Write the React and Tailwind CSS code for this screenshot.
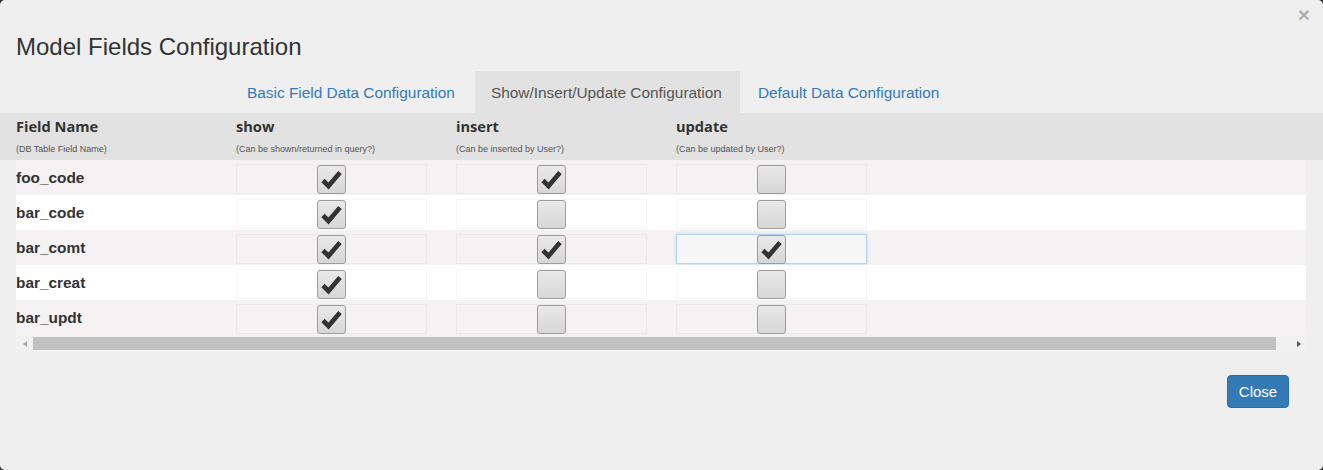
import React from 'react';

const columns = [
    { key: 'show', label: 'show', hint: '(Can be shown/returned in query?)' },
    { key: 'insert', label: 'insert', hint: '(Can be inserted by User?)' },
    { key: 'update', label: 'update', hint: '(Can be updated by User?)' },
];

const fields = [
    { name: 'foo_code', show: true, insert: true, update: false },
    { name: 'bar_code', show: true, insert: false, update: false },
    { name: 'bar_comt', show: true, insert: true, update: true, focus: 'update' },
    { name: 'bar_creat', show: true, insert: false, update: false },
    { name: 'bar_updt', show: true, insert: false, update: false },
];

const tabs = [
    { label: 'Basic Field Data Configuration', active: false },
    { label: 'Show/Insert/Update Configuration', active: true },
    { label: 'Default Data Configuration', active: false },
];

const CheckBox = ({ checked }) => (
    <div className="w-[29px] h-[29px] rounded-[3px] border border-[#9c9c9c] bg-gradient-to-b from-[#e9e9e9] to-[#d7d7d7] flex items-center justify-center">
        {checked && (
            <svg width="23" height="23" viewBox="0 0 23 23">
                <path d="M3 12.5 L8.5 18 L20 4.5" fill="none" stroke="#333" strokeWidth="4.6" strokeLinejoin="miter" />
            </svg>
        )}
    </div>
);

const App = () => {
    return (
        <div className="w-[1323px] h-[470px] bg-[#333] font-['Liberation_Sans',Arial,sans-serif]">
            <div className="relative w-full h-full bg-[#efefef] rounded-[5px]">
                {/* close x */}
                <span className="absolute right-[13px] top-[3px] text-[21px] font-bold leading-[24px] text-[#b0b0b0]">×</span>

                {/* title */}
                <div className="px-4 pt-[34px] h-[71px]">
                    <h1 className="text-[24px] leading-[26px] text-[#333]">Model Fields Configuration</h1>
                </div>

                {/* tabs */}
                <div className="flex pl-[231px] gap-[2px] h-[42px]">
                    {tabs.map((tab) => (
                        <div
                            key={tab.label}
                            className={
                                tab.active
                                    ? 'pl-4 pr-[18px] pt-[1px] flex items-center text-[15.4px] text-[#555] bg-[#e2e2e2]'
                                    : 'pl-4 pr-[18px] pt-[1px] flex items-center text-[15.4px] text-[#337ab7]'
                            }
                        >
                            {tab.label}
                        </div>
                    ))}
                </div>

                {/* header row */}
                <div className="h-[47px] bg-[#e2e2e2] grid grid-cols-[236px_220px_220px_220px] font-['Open_Sans',sans-serif]">
                    <div className="pl-4 pt-[3px]">
                        <div className="text-[14.6px] font-bold leading-[21px] text-[#333]">Field Name</div>
                        <div className="text-[9px] leading-[11px] mt-[7px] text-[#555] font-['Liberation_Sans',Arial,sans-serif]">(DB Table Field Name)</div>
                    </div>
                    {columns.map((col) => (
                        <div key={col.key} className="pt-[3px]">
                            <div className="text-[14.6px] font-bold leading-[21px] text-[#333]">{col.label}</div>
                            <div className="text-[9px] leading-[11px] mt-[7px] text-[#555] font-['Liberation_Sans',Arial,sans-serif]">{col.hint}</div>
                        </div>
                    ))}
                </div>

                {/* rows */}
                <div className="ml-4 w-[1290px]">
                    {fields.map((f, i) => (
                        <div
                            key={f.name}
                            className={`h-[35px] grid grid-cols-[220px_220px_220px_220px] ${i % 2 === 0 ? 'bg-[#f4f2f2]' : 'bg-white'}`}
                        >
                            <div className="flex items-center text-[15.4px] font-bold text-[#333]">{f.name}</div>
                            {columns.map((col) => (
                                <div key={col.key} className="pt-[4px]">
                                    <div
                                        className={
                                            f.focus === col.key
                                                ? 'w-[191px] h-[30px] border border-[#b5d3ee] bg-[#f7f7f8] shadow-[0_0_3px_rgba(102,175,233,0.35)] flex items-center justify-center'
                                                : i % 2 === 0
                                                  ? 'w-[191px] h-[30px] border border-[#ebe9e9] flex items-center justify-center'
                                                  : 'w-[191px] h-[30px] border border-[#f7f6f6] flex items-center justify-center'
                                        }
                                    >
                                        <CheckBox checked={f[col.key]} />
                                    </div>
                                </div>
                            ))}
                        </div>
                    ))}

                    {/* horizontal scrollbar */}
                    <div className="h-[17px] bg-[#f1f1f1] flex items-center">
                        <div className="w-[17px] flex justify-center">
                            <div className="w-0 h-0 border-y-[3.5px] border-y-transparent border-r-[4px] border-r-[#a3a3a3]" />
                        </div>
                        <div className="h-[13px] w-[1243px] bg-[#c1c1c1]" />
                        <div className="flex-1 flex justify-end pr-[5px]">
                            <div className="w-0 h-0 border-y-[3.5px] border-y-transparent border-l-[4px] border-l-[#505050]" />
                        </div>
                    </div>
                </div>

                {/* footer */}
                <div className="flex justify-end pr-[34px] pt-[23px]">
                    <button className="h-[33px] w-[62px] pt-[1px] rounded-[4px] bg-[#337ab7] border border-[#2e6da4] text-white text-[15px]">
                        Close
                    </button>
                </div>
            </div>
        </div>
    );
};

export default App;
